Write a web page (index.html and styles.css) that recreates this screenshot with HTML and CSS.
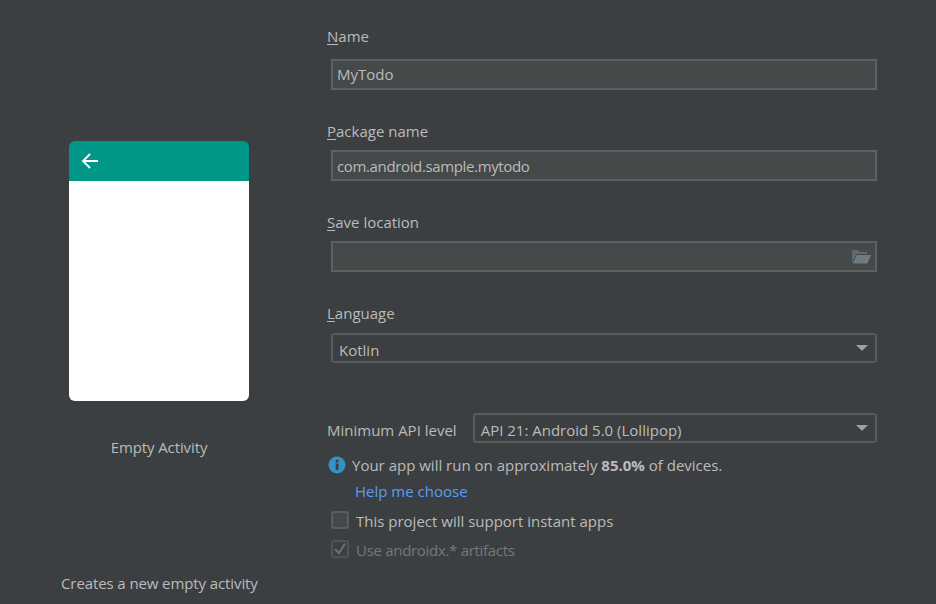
FILE: index.html
```html
<!DOCTYPE html>
<html lang="en">
<head>
<meta charset="utf-8">
<title>New Project</title>
<link rel="stylesheet" href="styles.css">
</head>
<body>
<main class="page">
  <section class="preview">
    <div class="phone">
      <div class="phone-bar">
        <svg class="back" width="18" height="18" viewBox="0 0 18 18"><path d="M17 9H2M9 2 2 9l7 7" fill="none" stroke="#fff" stroke-width="1.8"/></svg>
      </div>
      <div class="phone-body"></div>
    </div>
    <div class="caption">Empty Activity</div>
    <div class="description">Creates a new empty activity</div>
  </section>
  <section class="form">
    <label class="label label-first"><u>N</u>ame</label>
    <div class="input">MyTodo</div>
    <label class="label"><u>P</u>ackage name</label>
    <div class="input input-package">com.android.sample.mytodo</div>
    <label class="label"><u>S</u>ave location</label>
    <div class="input input-folder">
      <svg width="20" height="15" viewBox="0 0 20 15"><path d="M1 14V1h6l2 2h7v2H5L1 14Z" fill="#5f6b74"/><path d="M5.500 6H20l-3.500 8.500H1.800Z" fill="#6e7b85"/></svg>
    </div>
    <label class="label"><u>L</u>anguage</label>
    <div class="select select-lang"><span>Kotlin</span><i class="arrow"></i></div>
    <div class="api-row">
      <span class="api-label">Minimum API level</span>
      <div class="select select-api"><span>API 21: Android 5.0 (Lollipop)</span><i class="arrow"></i></div>
    </div>
    <div class="info">
      <svg width="18" height="18" viewBox="0 0 18 18"><circle cx="9" cy="9" r="8.500" fill="#3592c4"/><rect x="7.700" y="7.500" width="2.800" height="6.500" fill="#3c3f41"/><rect x="7.700" y="3.800" width="2.800" height="2.600" fill="#3c3f41"/></svg>
      <span>Your app will run on approximately <b>85.0%</b> of devices.</span>
    </div>
    <a class="help">Help me choose</a>
    <div class="check"><i class="box"></i><span>This project will support instant apps</span></div>
    <div class="check check-disabled">
      <i class="box">
        <svg width="14" height="14" viewBox="0 0 14 14"><path d="M2 7l4 4 6-9.500" fill="none" stroke="#6e6e6e" stroke-width="2.200"/></svg>
      </i>
      <span class="check-text-tight">Use androidx.* artifacts</span>
    </div>
  </section>
</main>
</body>
</html>
```
FILE: styles.css
```css
html, body { margin: 0; height: 100%; }
body {
  background: #3c3f41;
  color: #bbbbbb;
  font-family: "Open Sans", "Noto Sans", sans-serif;
  font-size: 15px;
  overflow: hidden;
}
.page { display: flex; height: 604px; }
.preview {
  width: 327px;
  box-sizing: border-box;
  padding: 141px 0 0 61px;
  display: flex;
  flex-direction: column;
  flex: none;
}
.phone {
  width: 180px;
  height: 260px;
  margin-left: 8px;
  border-radius: 6px;
  overflow: hidden;
  display: flex;
  flex-direction: column;
}
.phone-bar {
  height: 40px;
  background: #009688;
  display: flex;
  align-items: center;
  padding-left: 12px;
  flex: none;
}
.phone-body { flex: 1; background: #fff; }
.caption {
  width: 180px;
  margin: 36px 0 0 8px;
  text-align: center;
  line-height: 20px;
  letter-spacing: -0.1px;
}
.description { margin-top: 116px; line-height: 20px; letter-spacing: -0.1px; }
.form { flex: none; width: 550px; padding-top: 26px; }
.label { display: block; line-height: 20px; margin-top: 31px; margin-bottom: 9px; }
.label-first { margin-top: 0; margin-bottom: 13px; }
.input {
  box-sizing: border-box;
  height: 31px;
  margin-left: 4px;
  background: #45494a;
  border: 2px solid #5e6162;
  padding-left: 4px;
  line-height: 27px;
}
.input-package { letter-spacing: -0.36px; line-height: 29px; }
.input-folder { display: flex; justify-content: flex-end; align-items: center; padding-right: 4px; }
.select {
  box-sizing: border-box;
  height: 30px;
  border: 2px solid #595c5d;
  border-radius: 3px;
  display: flex;
  align-items: center;
  justify-content: space-between;
  padding: 4px 7px 0 6px;
}
.select-lang { margin: 10px 0 0 4px; }
.arrow {
  width: 0;
  height: 0;
  border-left: 6px solid transparent;
  border-right: 6px solid transparent;
  border-top: 6px solid #a0a0a0;
  margin-top: -4px;
}
.api-row { display: flex; align-items: center; gap: 16px; margin-top: 50px; }
.api-label { padding-top: 4px; }
.select-api { flex: 1; }
.info { display: flex; align-items: center; gap: 6px; margin: 12px 0 0 1px; line-height: 20px; }
.info b { font-weight: 700; }
.help { display: block; color: #589df6; margin: 6px 0 0 28px; line-height: 20px; }
.check { display: flex; align-items: flex-start; gap: 7px; margin: 9px 0 0 4px; line-height: 22px; }
.check-disabled { margin-top: 7px; }
.box {
  box-sizing: border-box;
  width: 18px;
  height: 18px;
  margin-top: 1px;
  border: 2px solid #5a5d5e;
  border-radius: 3px;
  background: #43494a;
  display: block;
}
.box svg { display: block; }
.check-disabled { color: #777777; }
.check-disabled .box { background: #3c3f41; border-color: #505354; }
.check-text-tight { letter-spacing: -0.3px; }
u { text-underline-offset: 2px; }
```
